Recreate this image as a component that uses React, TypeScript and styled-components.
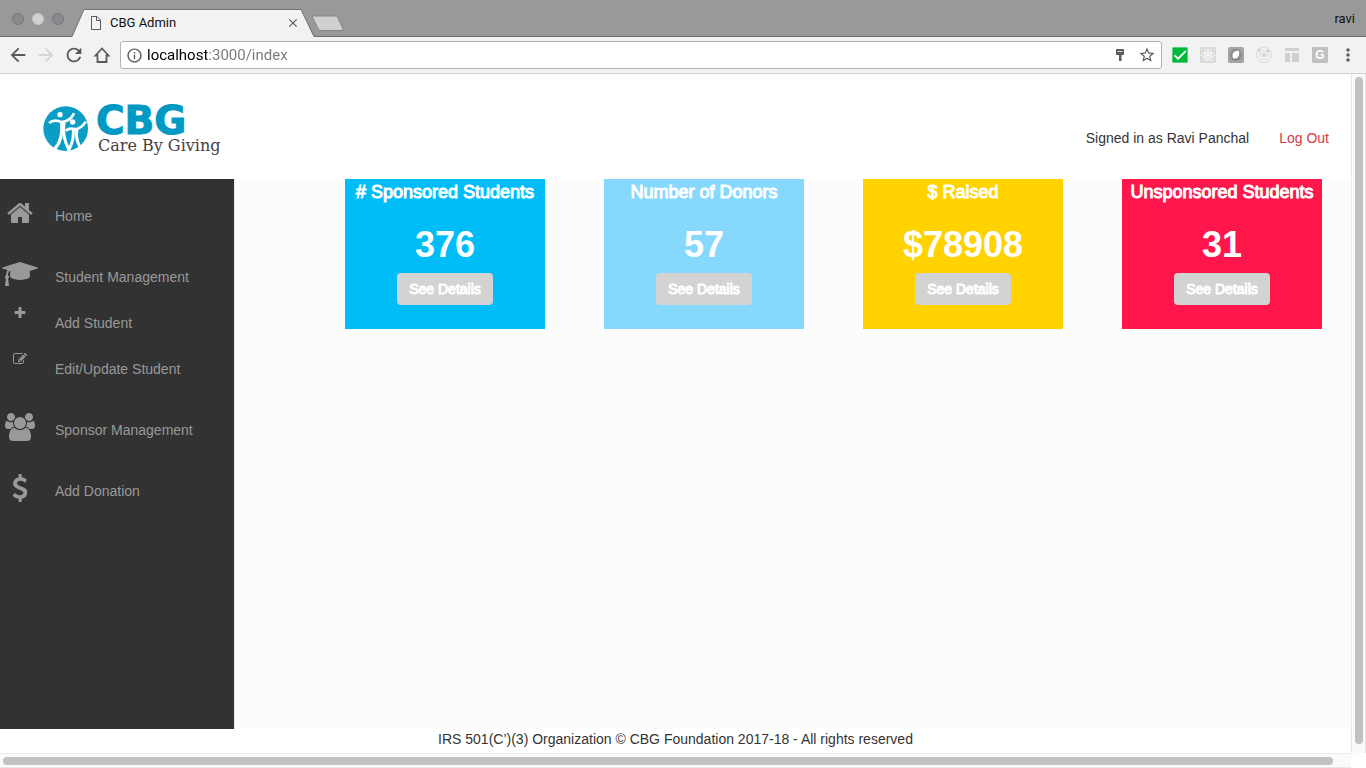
import React from 'react';
import styled, { createGlobalStyle, css } from 'styled-components';
import { MdArrowBack, MdArrowForward, MdRefresh, MdInfoOutline, MdStarBorder, MdMoreVert, MdCheck, MdClose } from 'react-icons/md';
import { FaReact } from 'react-icons/fa';

const GlobalStyle = createGlobalStyle`
  *, *::before, *::after { box-sizing: border-box; }
  body {
    margin: 0;
    background: #fff;
    color: #333;
    font-family: "Liberation Sans", Helvetica, Arial, sans-serif;
    font-size: 14px;
    line-height: 20px;
  }
  button, input { font: inherit; }
  svg { display: block; flex: none; }
`;

const Window = styled.div`
  display: flex;
  flex-direction: column;
  min-height: 100vh;
`;

/* ---------- browser frame ---------- */

const TabStrip = styled.div`
  display: flex;
  align-items: flex-end;
  height: 37px;
  padding: 0 11px 0 12px;
  background: #999;
  box-shadow: inset 0 -1px #6e6e6e;
  font-family: Roboto, "Open Sans", sans-serif;
  font-size: 13px;
  color: #111;
`;

const WindowControls = styled.div`
  display: flex;
  gap: 8px;
  width: 60px;
  align-self: center;
`;

const ControlDot = styled.button<{ $light?: boolean }>`
  width: 12px;
  height: 12px;
  padding: 0;
  border: 1px solid ${p => (p.$light ? '#c4c4c4' : '#76767b')};
  border-radius: 50%;
  background: ${p => (p.$light ? '#d2d2d2' : '#88888d')};
`;

const TabBody = styled.div`
  display: flex;
  align-items: center;
  width: 217px;
  height: 28px;
  padding: 0 1px 2px 6px;
  border-top: 1px solid #6e6e6e;
  background: #f2f2f2;
`;

const TabTitle = styled.span`
  flex: 1;
  margin-left: 8px;
`;

const PlainButton = styled.button`
  display: flex;
  align-items: center;
  justify-content: center;
  padding: 0;
  border: 0;
  background: none;
  color: inherit;
`;

const NewTab = styled(PlainButton)`
  align-self: center;
  margin: 10px 0 0 -4px;
`;

const Profile = styled.span`
  margin-left: auto;
  align-self: center;
`;

const Toolbar = styled.div`
  display: flex;
  align-items: center;
  height: 37px;
  padding: 0 8px 0 7px;
  border-bottom: 1px solid #d2d2d2;
  background: #f2f2f2;
  color: #5a5a5a;
`;

const NavButtons = styled.div`
  display: flex;
  gap: 6px;
  margin-right: 7px;
`;

const AddressBar = styled.label`
  display: flex;
  flex: 1;
  align-items: center;
  height: 28px;
  padding: 0 5px;
  border: 1px solid #b2b2b2;
  border-radius: 3px;
  background: #fff;
`;

const AddressInput = styled.input`
  flex: 1;
  min-width: 0;
  margin-left: 4px;
  padding: 0;
  border: 0;
  outline: 0;
  background: linear-gradient(90deg, #000 60px, #777 60px);
  background-clip: text;
  -webkit-background-clip: text;
  color: transparent;
  font-family: Roboto, "Open Sans", sans-serif;
  font-size: 15px;
`;

const AddressActions = styled.div`
  display: flex;
  align-items: center;
  gap: 9px;
`;

const Extensions = styled.div`
  display: flex;
  align-items: center;
  gap: 12px;
  margin: 0 10px;
`;

const Extension = styled(PlainButton)<{ $bg?: string }>`
  width: 16px;
  height: 16px;
  border-radius: 1px;
  background: ${p => p.$bg ?? 'none'};
  color: #fff;
  font-size: 12px;
  font-weight: 700;
  line-height: 16px;
`;

/* ---------- scrolling viewport ---------- */

const Viewport = styled.div`
  display: grid;
  flex: 1;
  grid-template: 1fr 15px / 1fr 15px;
`;

const trackBase = css`
  display: flex;
  background: #fafafa;
  border: 0 solid #e8e8e8;
`;

const VerticalTrack = styled.div`
  ${trackBase}
  border-width: 0 1px;
  padding: 3px 2px 9px 3px;
`;

const HorizontalTrack = styled.div`
  ${trackBase}
  border-width: 1px 0;
  padding: 3px 18px 2px 3px;
`;

const Thumb = styled.div`
  flex: 1;
  border-radius: 4px;
  background: #c1c1c1;
`;

/* ---------- page ---------- */

const Page = styled.div`
  display: flex;
  flex-direction: column;
  min-width: 0;
`;

const Header = styled.header`
  display: flex;
  align-items: center;
  height: 105px;
  padding: 22px 22px 0 43px;
  background: #fff;
`;

const Logo = styled.a`
  display: flex;
  align-self: flex-start;
  gap: 7px;
  padding-top: 10px;
  text-decoration: none;
`;

const LogoText = styled.span`
  display: flex;
  flex-direction: column;
`;

const LogoName = styled.span`
  color: #0099c4;
  font: 700 39px/30px "DejaVu Sans", sans-serif;
  -webkit-text-stroke: 1px #0099c4;
`;

const LogoTagline = styled.span`
  padding-left: 2px;
  color: #4a3f42;
  font: 16px/20px "DejaVu Serif", serif;
`;

const Account = styled.div`
  display: flex;
  gap: 30px;
  margin-left: auto;
`;

const LogOut = styled.a`
  color: #d9383f;
  text-decoration: none;
`;

const Main = styled.div`
  display: flex;
  flex: 1;
`;

const Sidebar = styled.nav`
  width: 234px;
  padding-top: 14px;
  background: #323232;
`;

const NavGroup = styled.ul`
  margin: 0 0 15px;
  padding: 0;
  list-style: none;
`;

const NavLink = styled.a`
  display: flex;
  height: 46px;
  color: #999;
  line-height: 46px;
  text-decoration: none;
`;

const NavIcon = styled.span`
  display: flex;
  flex: none;
  justify-content: center;
  width: 40px;
  margin-right: 15px;
  padding-top: 6px;
`;

const Dashboard = styled.main`
  display: flex;
  flex: 1;
  align-items: flex-start;
  justify-content: space-between;
  padding: 0 29px 0 110px;
  border-left: 1px solid #ececec;
  background: #fcfcfc;
`;

const Card = styled.section<{ $color: string }>`
  display: flex;
  flex-direction: column;
  align-items: center;
  width: 200px;
  height: 150px;
  padding-top: 3px;
  background: ${p => p.$color};
  color: #fff;
`;

const CardTitle = styled.h2`
  margin: 0 0 23px;
  font-size: 18px;
  font-weight: 400;
  line-height: 20px;
  white-space: nowrap;
  -webkit-text-stroke: 1px #fff;
`;

const CardValue = styled.strong`
  margin-bottom: 8px;
  font-size: 36px;
  line-height: 40px;
`;

const DetailsButton = styled.button`
  padding: 6px 12px;
  border: 0;
  border-radius: 4px;
  background: #d3d3d3;
  color: #fff;
  -webkit-text-stroke: 1px #fff;
`;

const Footer = styled.footer`
  height: 24px;
  background: #fff;
  text-align: center;
`;

/* Glyph outlines use a 1792-unit em; flipped ones have the y axis pointing up from the baseline. */
const glyphs = {
  home: { w: 1792, flip: false, d: 'M1472 992v480q0 26-19 45t-45 19h-384v-384h-256v384h-384q-26 0-45-19t-19-45v-480q0-1 .5-3t.5-3l575-474 575 474q1 2 1 6zm223-69l-62 74q-8 9-21 11h-3q-13 0-21-7l-692-577-692 577q-12 8-24 7-13-2-21-11l-62-74q-8-10-7-23.5t11-21.5l719-599q32-26 76-26t76 26l244 204v-195q0-14 9-23t23-9h192q14 0 23 9t9 23v408l219 182q10 8 11 21.5t-7 23.5z' },
  cap: { w: 2304, flip: true, d: 'M1774 836l18 -316q4 -69 -82 -128t-235 -93.5t-323 -34.5t-323 34.5t-235 93.5t-82 128l18 316l574 -181q22 -7 48 -7t48 7zM2304 1024q0 -23 -22 -31l-1120 -352q-4 -1 -10 -1t-10 1l-652 206q-43 -34 -71 -111.5t-34 -178.5q63 -36 63 -109q0 -69 -58 -107l58 -433q2 -14 -8 -25q-9 -11 -24 -11h-192q-15 0 -24 11q-10 11 -8 25l58 433q-58 38 -58 107q0 73 65 111q11 207 98 330l-333 104q-22 8 -22 31t22 31l1120 352q4 1 10 1t10 -1l1120 -352q22 -8 22 -31z' },
  plus: { w: 1792, flip: false, d: 'M1600 736v192q0 40-28 68t-68 28h-416v416q0 40-28 68t-68 28h-192q-40 0-68-28t-28-68v-416h-416q-40 0-68-28t-28-68v-192q0-40 28-68t68-28h416v-416q0-40 28-68t68-28h192q40 0 68 28t28 68v416h416q40 0 68 28t28 68z' },
  edit: { w: 1792, flip: false, d: 'M888 1184l116-116-152-152-116 116v56h96v96h56zm440-720q-16-16-33 1l-350 350q-17 17-1 33t33-1l350-350q17-17 1-33zm80 594v190q0 119-84.5 203.5t-203.5 84.5h-832q-119 0-203.5-84.5t-84.5-203.5v-832q0-119 84.5-203.5t203.5-84.5h832q63 0 117 25 15 7 18 23 3 17-9 29l-49 49q-14 14-32 8-23-6-45-6h-832q-66 0-113 47t-47 113v832q0 66 47 113t113 47h832q66 0 113-47t47-113v-126q0-13 9-22l64-64q15-15 35-7t20 29zm-96-738l288 288-672 672h-288v-288zm444 132l-92 92-288-288 92-92q28-28 68-28t68 28l152 152q28 28 28 68t-28 68z' },
  users: { w: 1920, flip: true, d: 'M593 640q-162 -5 -265 -128h-134q-82 0 -138 40.5t-56 118.5q0 353 124 353q6 0 43.5 -21t97.5 -42.5t119 -21.5q67 0 133 23q-5 -37 -5 -66q0 -139 81 -256zM1664 3q0 -120 -73 -189.5t-194 -69.5h-874q-121 0 -194 69.5t-73 189.5q0 53 3.5 103.5t14 109t26.5 108.5t43 97.5t62 81t85.5 53.5t111.5 20q10 0 43 -21.5t73 -48t107 -48t135 -21.5t135 21.5t107 48t73 48t43 21.5q61 0 111.5 -20t85.5 -53.5t62 -81t43 -97.5t26.5 -108.5t14 -109t3.5 -103.5zM640 1280q0 -106 -75 -181t-181 -75t-181 75t-75 181t75 181t181 75t181 -75t75 -181zM1344 896q0 -159 -112.5 -271.5t-271.5 -112.5t-271.5 112.5t-112.5 271.5t112.5 271.5t271.5 112.5t271.5 -112.5t112.5 -271.5zM1920 671q0 -78 -56 -118.5t-138 -40.5h-134q-103 123 -265 128q81 117 81 256q0 29 -5 66q66 -23 133 -23q59 0 119 21.5t97.5 42.5t43.5 21q124 0 124 -353zM1792 1280q0 -106 -75 -181t-181 -75t-181 75t-75 181t75 181t181 75t181 -75t75 -181z' },
  dollar: { w: 1792, flip: false, d: 'M1362 1185q0 153-99.5 263.5t-258.5 136.5v175q0 14-9 23t-23 9h-135q-13 0-22.5-9.5t-9.5-22.5v-175q-66-9-127.5-31t-101.5-44.5-74-48-46.5-37.5-17.5-18q-17-21-2-41l103-135q7-10 23-12 15-2 24 9l2 2q113 99 243 125 37 8 74 8 81 0 142.5-43t61.5-122q0-28-15-53t-33.5-42-58.5-37.5-66-32-80-32.5q-39-16-61.5-25t-61.5-26.5-62.5-31-56.5-35.5-53.5-42.5-43.5-49-35.5-58-21-66.5-8.5-78q0-138 98-242t255-134v-180q0-13 9.5-22.5t22.5-9.5h135q14 0 23 9t9 23v176q57 6 110.5 23t87 33.5 63.5 37.5 39 29 15 14q17 18 5 38l-81 146q-8 15-23 16-14 3-27-7-3-3-14.5-12t-39-26.5-58.5-32-74.5-26-85.5-11.5q-95 0-155 43t-60 111q0 26 8.5 48t29.5 41.5 39.5 33 56 31 60.5 27 70 27.5q53 20 81 31.5t76 35 75.5 42.5 62 50 53 63.5 31.5 76.5 13 94z' },
};

type GlyphName = keyof typeof glyphs;

function Glyph({ name, size }: { name: GlyphName; size: number }) {
  const { w, flip, d } = glyphs[name];
  return (
    <svg width={(size * w) / 1792} height={size} viewBox={`0 0 ${w} 1792`} fill="currentColor" aria-hidden="true">
      <path d={d} transform={flip ? 'translate(0 1536) scale(1 -1)' : undefined} />
    </svg>
  );
}

function LogoMark() {
  return (
    <svg width="46" height="46" viewBox="38 48 138 138" aria-hidden="true">
      <circle cx="106" cy="116" r="67" fill="#0a9dc6" />
      <g fill="#fff">
        <circle cx="89" cy="74" r="8" />
        <circle cx="127" cy="96" r="8" />
      </g>
      <g fill="none" stroke="#fff" strokeWidth="8">
        <path d="M56 99C68 89 82 91 93 96C111 95 124 86 131 70" />
        <path d="M94 96C97 126 93 154 74 176" strokeWidth="10" />
        <path d="M101 97C97 124 103 156 116 180" strokeWidth="9" />
        <path d="M106 122C117 112 128 116 137 118C151 114 160 106 166 95" />
        <path d="M129 118C131 144 124 166 113 184" strokeWidth="9" />
        <path d="M140 118C136 140 141 158 149 171" strokeWidth="9" />
      </g>
    </svg>
  );
}

const navGroups: { icon: GlyphName; size: number; label: string }[][] = [
  [{ icon: 'home', size: 28, label: 'Home' }],
  [
    { icon: 'cap', size: 28, label: 'Student Management' },
    { icon: 'plus', size: 14, label: 'Add Student' },
    { icon: 'edit', size: 14, label: 'Edit/Update Student' },
  ],
  [{ icon: 'users', size: 28, label: 'Sponsor Management' }],
  [{ icon: 'dollar', size: 28, label: 'Add Donation' }],
];

const cards = [
  { title: '# Sponsored Students', value: '376', color: '#00bdf7' },
  { title: 'Number of Donors', value: '57', color: '#87d8fd' },
  { title: '$ Raised', value: '$78908', color: '#ffd200' },
  { title: 'Unsponsored Students', value: '31', color: '#ff174b' },
];

function BrowserFrame() {
  return (
    <>
      <TabStrip>
        <WindowControls>
          <ControlDot aria-label="Close window" />
          <ControlDot $light aria-label="Minimize window" />
          <ControlDot aria-label="Zoom window" />
        </WindowControls>
        <svg width="12" height="28" viewBox="0 0 12 28" aria-hidden="true">
          <path d="M0 28L12 0V28Z" fill="#f2f2f2" />
          <path d="M0 27.500L12 0.500" stroke="#6e6e6e" />
        </svg>
        <TabBody>
          <svg width="12" height="14" viewBox="0 0 12 14" fill="none" stroke="#5a5a5a" aria-hidden="true">
            <path d="M1.500 .5H7L10.500 4V13.500H1.500ZM6.500 .5V4.500H10.500" />
          </svg>
          <TabTitle>CBG Admin</TabTitle>
          <PlainButton aria-label="Close tab"><MdClose size={14} color="#5a5a5a" /></PlainButton>
        </TabBody>
        <svg width="14" height="28" viewBox="0 0 14 28" aria-hidden="true">
          <path d="M0 0L13 28H0Z" fill="#f2f2f2" />
          <path d="M0 .5L13 27.500" stroke="#6e6e6e" />
        </svg>
        <NewTab aria-label="New tab">
          <svg width="34" height="17" viewBox="0 0 34 17" aria-hidden="true">
            <path d="M2.500 1H24Q26 1 27 3L32 14Q32.500 15.500 31 15.500H10Q8 15.500 7 13.500L1.500 2Q1.500 1 2.500 1Z" fill="#d0d0d0" stroke="#868686" />
          </svg>
        </NewTab>
        <Profile>ravi</Profile>
      </TabStrip>
      <Toolbar>
        <NavButtons>
          <PlainButton aria-label="Back"><MdArrowBack size={22} /></PlainButton>
          <PlainButton aria-label="Forward"><MdArrowForward size={22} color="#d4d4d4" /></PlainButton>
          <PlainButton aria-label="Reload"><MdRefresh size={22} /></PlainButton>
          <PlainButton aria-label="Home page">
            <svg width="22" height="22" viewBox="0 0 22 22" fill="none" stroke="currentColor" strokeWidth="1.8" aria-hidden="true">
              <path d="M4.500 11.500H6.500V18H15.500V11.500H17.500L11 4.500Z" />
            </svg>
          </PlainButton>
        </NavButtons>
        <AddressBar>
          <MdInfoOutline size={17} />
          <AddressInput aria-label="Address" defaultValue="localhost:3000/index" />
          <AddressActions>
            <svg width="18" height="18" viewBox="0 0 18 18" fill="#5a5a5a" aria-hidden="true">
              <path d="M6 3H12Q13 3 13 4V8Q13 9 12 9H10.500V15H8V9H6Q5 9 5 8V4Q5 3 6 3Z" />
              <path d="M6.500 5.500H11.500" stroke="#ddd" />
            </svg>
            <MdStarBorder size={18} />
          </AddressActions>
        </AddressBar>
        <Extensions>
          <Extension $bg="#00b93c" aria-label="Checker"><MdCheck size={16} strokeWidth="1" stroke="#fff" /></Extension>
          <Extension $bg="#dadada" aria-label="React tools"><FaReact size={14} /></Extension>
          <Extension aria-label="Leaf">
            <svg width="16" height="16" viewBox="0 0 16 16" aria-hidden="true">
              <rect width="16" height="16" rx="2" fill="#a3a3a3" />
              <circle cx="8" cy="8" r="6" fill="#8c8c8c" />
              <path d="M5 11C3 6 7 3 11 4C12 9 9 13 5 11Z" fill="#fff" />
            </svg>
          </Extension>
          <Extension aria-label="Radar">
            <svg width="16" height="16" viewBox="0 0 16 16" fill="none" stroke="#dadada" aria-hidden="true">
              <circle cx="8" cy="8" r="7.500" />
              <circle cx="8" cy="8" r="4.500" />
              <circle cx="8" cy="8" r="2" fill="#d4d4d4" />
              <circle cx="3" cy="3" r="1" fill="#ccc" stroke="#ccc" />
              <circle cx="12" cy="4" r="1" fill="#ccc" stroke="#ccc" />
            </svg>
          </Extension>
          <Extension aria-label="Layout">
            <svg width="16" height="16" viewBox="0 0 16 16" fill="#cfcfcf" aria-hidden="true">
              <path d="M1 1H15V4H1ZM1 6H6V15H1ZM8 6H15V15H8Z" />
            </svg>
          </Extension>
          <Extension $bg="#c0c0c0" aria-label="G tools">G</Extension>
        </Extensions>
        <PlainButton aria-label="Menu"><MdMoreVert size={20} /></PlainButton>
      </Toolbar>
    </>
  );
}

export default function App() {
  return (
    <Window>
      <GlobalStyle />
      <BrowserFrame />
      <Viewport>
        <Page>
          <Header>
            <Logo href="#">
              <LogoMark />
              <LogoText>
                <LogoName>CBG</LogoName>
                <LogoTagline>Care By Giving</LogoTagline>
              </LogoText>
            </Logo>
            <Account>
              <span>Signed in as Ravi Panchal</span>
              <LogOut href="#">Log Out</LogOut>
            </Account>
          </Header>
          <Main>
            <Sidebar>
              {navGroups.map(group => (
                <NavGroup key={group[0].label}>
                  {group.map(item => (
                    <li key={item.label}>
                      <NavLink href="#">
                        <NavIcon><Glyph name={item.icon} size={item.size} /></NavIcon>
                        {item.label}
                      </NavLink>
                    </li>
                  ))}
                </NavGroup>
              ))}
            </Sidebar>
            <Dashboard>
              {cards.map(card => (
                <Card key={card.title} $color={card.color}>
                  <CardTitle>{card.title}</CardTitle>
                  <CardValue>{card.value}</CardValue>
                  <DetailsButton>See Details</DetailsButton>
                </Card>
              ))}
            </Dashboard>
          </Main>
          <Footer>IRS 501(C’)(3) Organization © CBG Foundation 2017-18 - All rights reserved</Footer>
        </Page>
        <VerticalTrack><Thumb /></VerticalTrack>
        <HorizontalTrack><Thumb /></HorizontalTrack>
      </Viewport>
    </Window>
  );
}
